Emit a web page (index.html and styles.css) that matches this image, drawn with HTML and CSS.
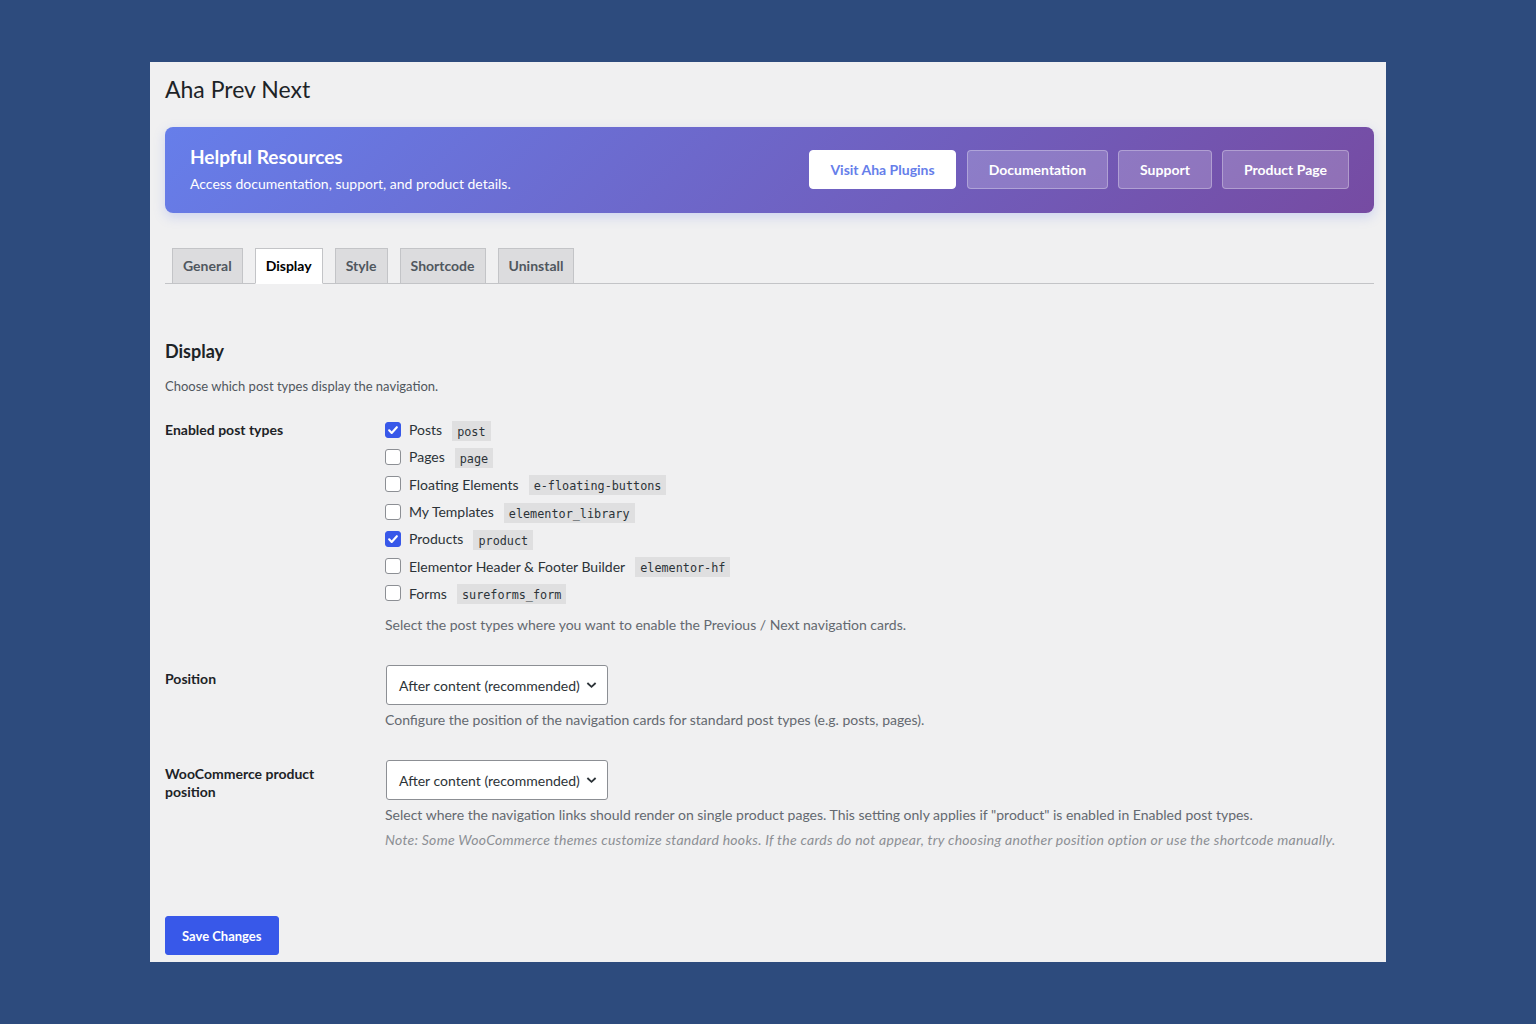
FILE: index.html
```html
<!DOCTYPE html>
<html lang="en">
<head>
    <meta charset="UTF-8">
    <meta name="viewport" content="width=device-width, initial-scale=1.0">
    <title>Aha Prev Next</title>
    <link rel="stylesheet" href="styles.css">
</head>
<body>
    <div class="wrap">
        <h1 class="page-title">Aha Prev Next</h1>

        <div class="resources">
            <div class="resources-text">
                <h2>Helpful Resources</h2>
                <p>Access documentation, support, and product details.</p>
            </div>
            <div class="resources-links">
                <a class="res-btn res-btn-primary" href="#">Visit Aha Plugins</a>
                <a class="res-btn" href="#">Documentation</a>
                <a class="res-btn" href="#">Support</a>
                <a class="res-btn" href="#">Product Page</a>
            </div>
        </div>

        <nav class="nav-tabs">
            <a class="nav-tab" href="#">General</a>
            <a class="nav-tab nav-tab-active" href="#">Display</a>
            <a class="nav-tab" href="#">Style</a>
            <a class="nav-tab" href="#">Shortcode</a>
            <a class="nav-tab" href="#">Uninstall</a>
        </nav>

        <h2 class="section-title">Display</h2>
        <p class="section-desc">Choose which post types display the navigation.</p>

        <div class="form-table">
            <div class="form-row">
                <div class="form-label">Enabled post types</div>
                <div class="form-field">
                    <label class="choice">
                        <span class="check is-checked"><svg viewBox="0 0 16 16"><path d="M3.6 8.4l2.9 3 5.9-6.6"/></svg></span>
                        Posts <code>post</code>
                    </label>
                    <label class="choice">
                        <span class="check"></span>
                        Pages <code>page</code>
                    </label>
                    <label class="choice">
                        <span class="check"></span>
                        Floating Elements <code>e-floating-buttons</code>
                    </label>
                    <label class="choice">
                        <span class="check"></span>
                        My Templates <code>elementor_library</code>
                    </label>
                    <label class="choice">
                        <span class="check is-checked"><svg viewBox="0 0 16 16"><path d="M3.6 8.4l2.9 3 5.9-6.6"/></svg></span>
                        Products <code>product</code>
                    </label>
                    <label class="choice">
                        <span class="check"></span>
                        Elementor Header &amp; Footer Builder <code>elementor-hf</code>
                    </label>
                    <label class="choice">
                        <span class="check"></span>
                        Forms <code>sureforms_form</code>
                    </label>
                    <p class="description list-desc">Select the post types where you want to enable the Previous / Next navigation cards.</p>
                </div>
            </div>

            <div class="form-row">
                <div class="form-label">Position</div>
                <div class="form-field">
                    <div class="select">
                        <span>After content (recommended)</span>
                        <svg viewBox="0 0 12 8"><path d="M1.5 1.8l4.5 4.2 4.5-4.2"/></svg>
                    </div>
                    <p class="description">Configure the position of the navigation cards for standard post types (e.g. posts, pages).</p>
                </div>
            </div>

            <div class="form-row">
                <div class="form-label">WooCommerce product position</div>
                <div class="form-field">
                    <div class="select">
                        <span>After content (recommended)</span>
                        <svg viewBox="0 0 12 8"><path d="M1.5 1.8l4.5 4.2 4.5-4.2"/></svg>
                    </div>
                    <p class="description">Select where the navigation links should render on single product pages. This setting only applies if "product" is enabled in Enabled post types.</p>
                    <p class="description note">Note: Some WooCommerce themes customize standard hooks. If the cards do not appear, try choosing another position option or use the shortcode manually.</p>
                </div>
            </div>
        </div>

        <p class="submit"><button class="btn-save" type="button">Save Changes</button></p>
    </div>
</body>
</html>
```

FILE: styles.css
```css
body{
    margin: 0;
    height: 1024px;
    overflow: hidden;
    background-color: #2d4b7d;
    font-family: Lato, "Noto Sans", sans-serif;
    font-size: 14px;
    color: #1d2327;
}
.wrap{
    width: 1236px;
    box-sizing: border-box;
    margin: 62px 0 0 150px;
    padding: 12px 12px 7px 15px;
    background-color: #f0f0f1;
}
.page-title{
    margin: 0;
    font-size: 23px;
    font-weight: 400;
    line-height: 30px;
    color: #1d2327;
}

/* resources banner */
.resources{
    display: flex;
    align-items: center;
    justify-content: space-between;
    margin-top: 23px;
    padding: 18px 25px 19px;
    border-radius: 8px;
    background: linear-gradient(135deg, #667eea 0%, #764ba2 100%);
    box-shadow: 0 4px 12px rgba(102, 126, 234, 0.25);
    color: #fff;
}
.resources-text h2{
    margin: 0;
    font-size: 19px;
    font-weight: 700;
    line-height: 24px;
}
.resources-text p{
    margin: 5px 0 0;
    font-size: 14px;
    line-height: 20px;
}
.resources-links{
    display: flex;
    gap: 10px;
}
.res-btn{
    padding: 9px 21px;
    border: 1px solid rgba(255, 255, 255, 0.3);
    border-radius: 4px;
    background-color: rgba(255, 255, 255, 0.2);
    color: #fff;
    font-size: 14px;
    font-weight: 700;
    line-height: 19px;
    text-decoration: none;
}
.res-btn-primary{
    padding: 9px 20px;
    margin-right: 1px;
    background-color: #fff;
    border-color: #fff;
    color: #667eea;
}

/* tabs */
.nav-tabs{
    display: flex;
    gap: 12px;
    margin-top: 35px;
    padding-left: 7px;
    border-bottom: 1px solid #c3c4c7;
}
.nav-tab{
    margin-bottom: -1px;
    padding: 5px 10px;
    border: 1px solid #c3c4c7;
    background-color: #dcdcde;
    color: #50575e;
    font-size: 14px;
    font-weight: 700;
    line-height: 24px;
    text-decoration: none;
}
.nav-tab-active{
    background-color: #fff;
    border-bottom-color: #fff;
    color: #000;
}

/* section */
.section-title{
    margin: 55px 0 0;
    font-size: 18px;
    font-weight: 700;
    line-height: 24px;
    color: #1d2327;
}
.section-desc{
    margin: 14px 0 0;
    font-size: 13px;
    line-height: 18px;
    color: #50575e;
}
.form-table{
    margin-top: 6px;
}
.form-row{
    display: grid;
    grid-template-columns: 220px 1fr;
}
.form-label{
    width: 200px;
    padding-top: 20px;
    font-weight: 700;
    line-height: 18px;
    color: #1d2327;
}
.form-field{
    padding: 15px 0;
}
.choice{
    display: flex;
    align-items: center;
    height: 27.3px;
    color: #2c3338;
}
.check{
    display: flex;
    align-items: center;
    justify-content: center;
    width: 16px;
    height: 16px;
    box-sizing: border-box;
    margin-right: 8px;
    border: 1px solid #8c8f94;
    border-radius: 3px;
    background-color: #fff;
}
.check.is-checked{
    background-color: #3858e9;
    border-color: #3858e9;
}
.check svg{
    width: 14px;
    height: 14px;
    fill: none;
    stroke: #fff;
    stroke-width: 2.4;
    stroke-linecap: round;
    stroke-linejoin: round;
}
code{
    margin: 2px 0 0 10px;
    padding: 4px 5px 2px;
    background-color: rgba(0, 0, 0, 0.07);
    font-family: "DejaVu Sans Mono", "Liberation Mono", monospace;
    font-size: 11.8px;
    line-height: 14px;
    color: #2c3338;
}
.description{
    margin: 5px 0 0;
    font-size: 14px;
    line-height: 20px;
    color: #646970;
}
.list-desc{
    margin-top: 8px;
}
.note{
    font-style: italic;
    letter-spacing: 0.27px;
    color: #8c8f94;
}
.select{
    display: flex;
    align-items: center;
    justify-content: space-between;
    width: 222px;
    height: 40px;
    box-sizing: border-box;
    margin-left: 1px;
    padding: 0 10px 0 12px;
    border: 1px solid #8c8f94;
    border-radius: 3px;
    background-color: #fff;
    color: #2c3338;
    font-size: 14px;
}
.select svg{
    width: 11px;
    height: 8px;
    fill: none;
    stroke: #2c3338;
    stroke-width: 2;
}

.submit{
    margin: 51px 0 0;
}
.btn-save{
    display: block;
    height: 39px;
    padding: 0 16px;
    border: 1px solid #3858e9;
    border-radius: 3px;
    background-color: #3858e9;
    color: #fff;
    font-family: inherit;
    font-size: 13px;
    font-weight: 700;
}
```
